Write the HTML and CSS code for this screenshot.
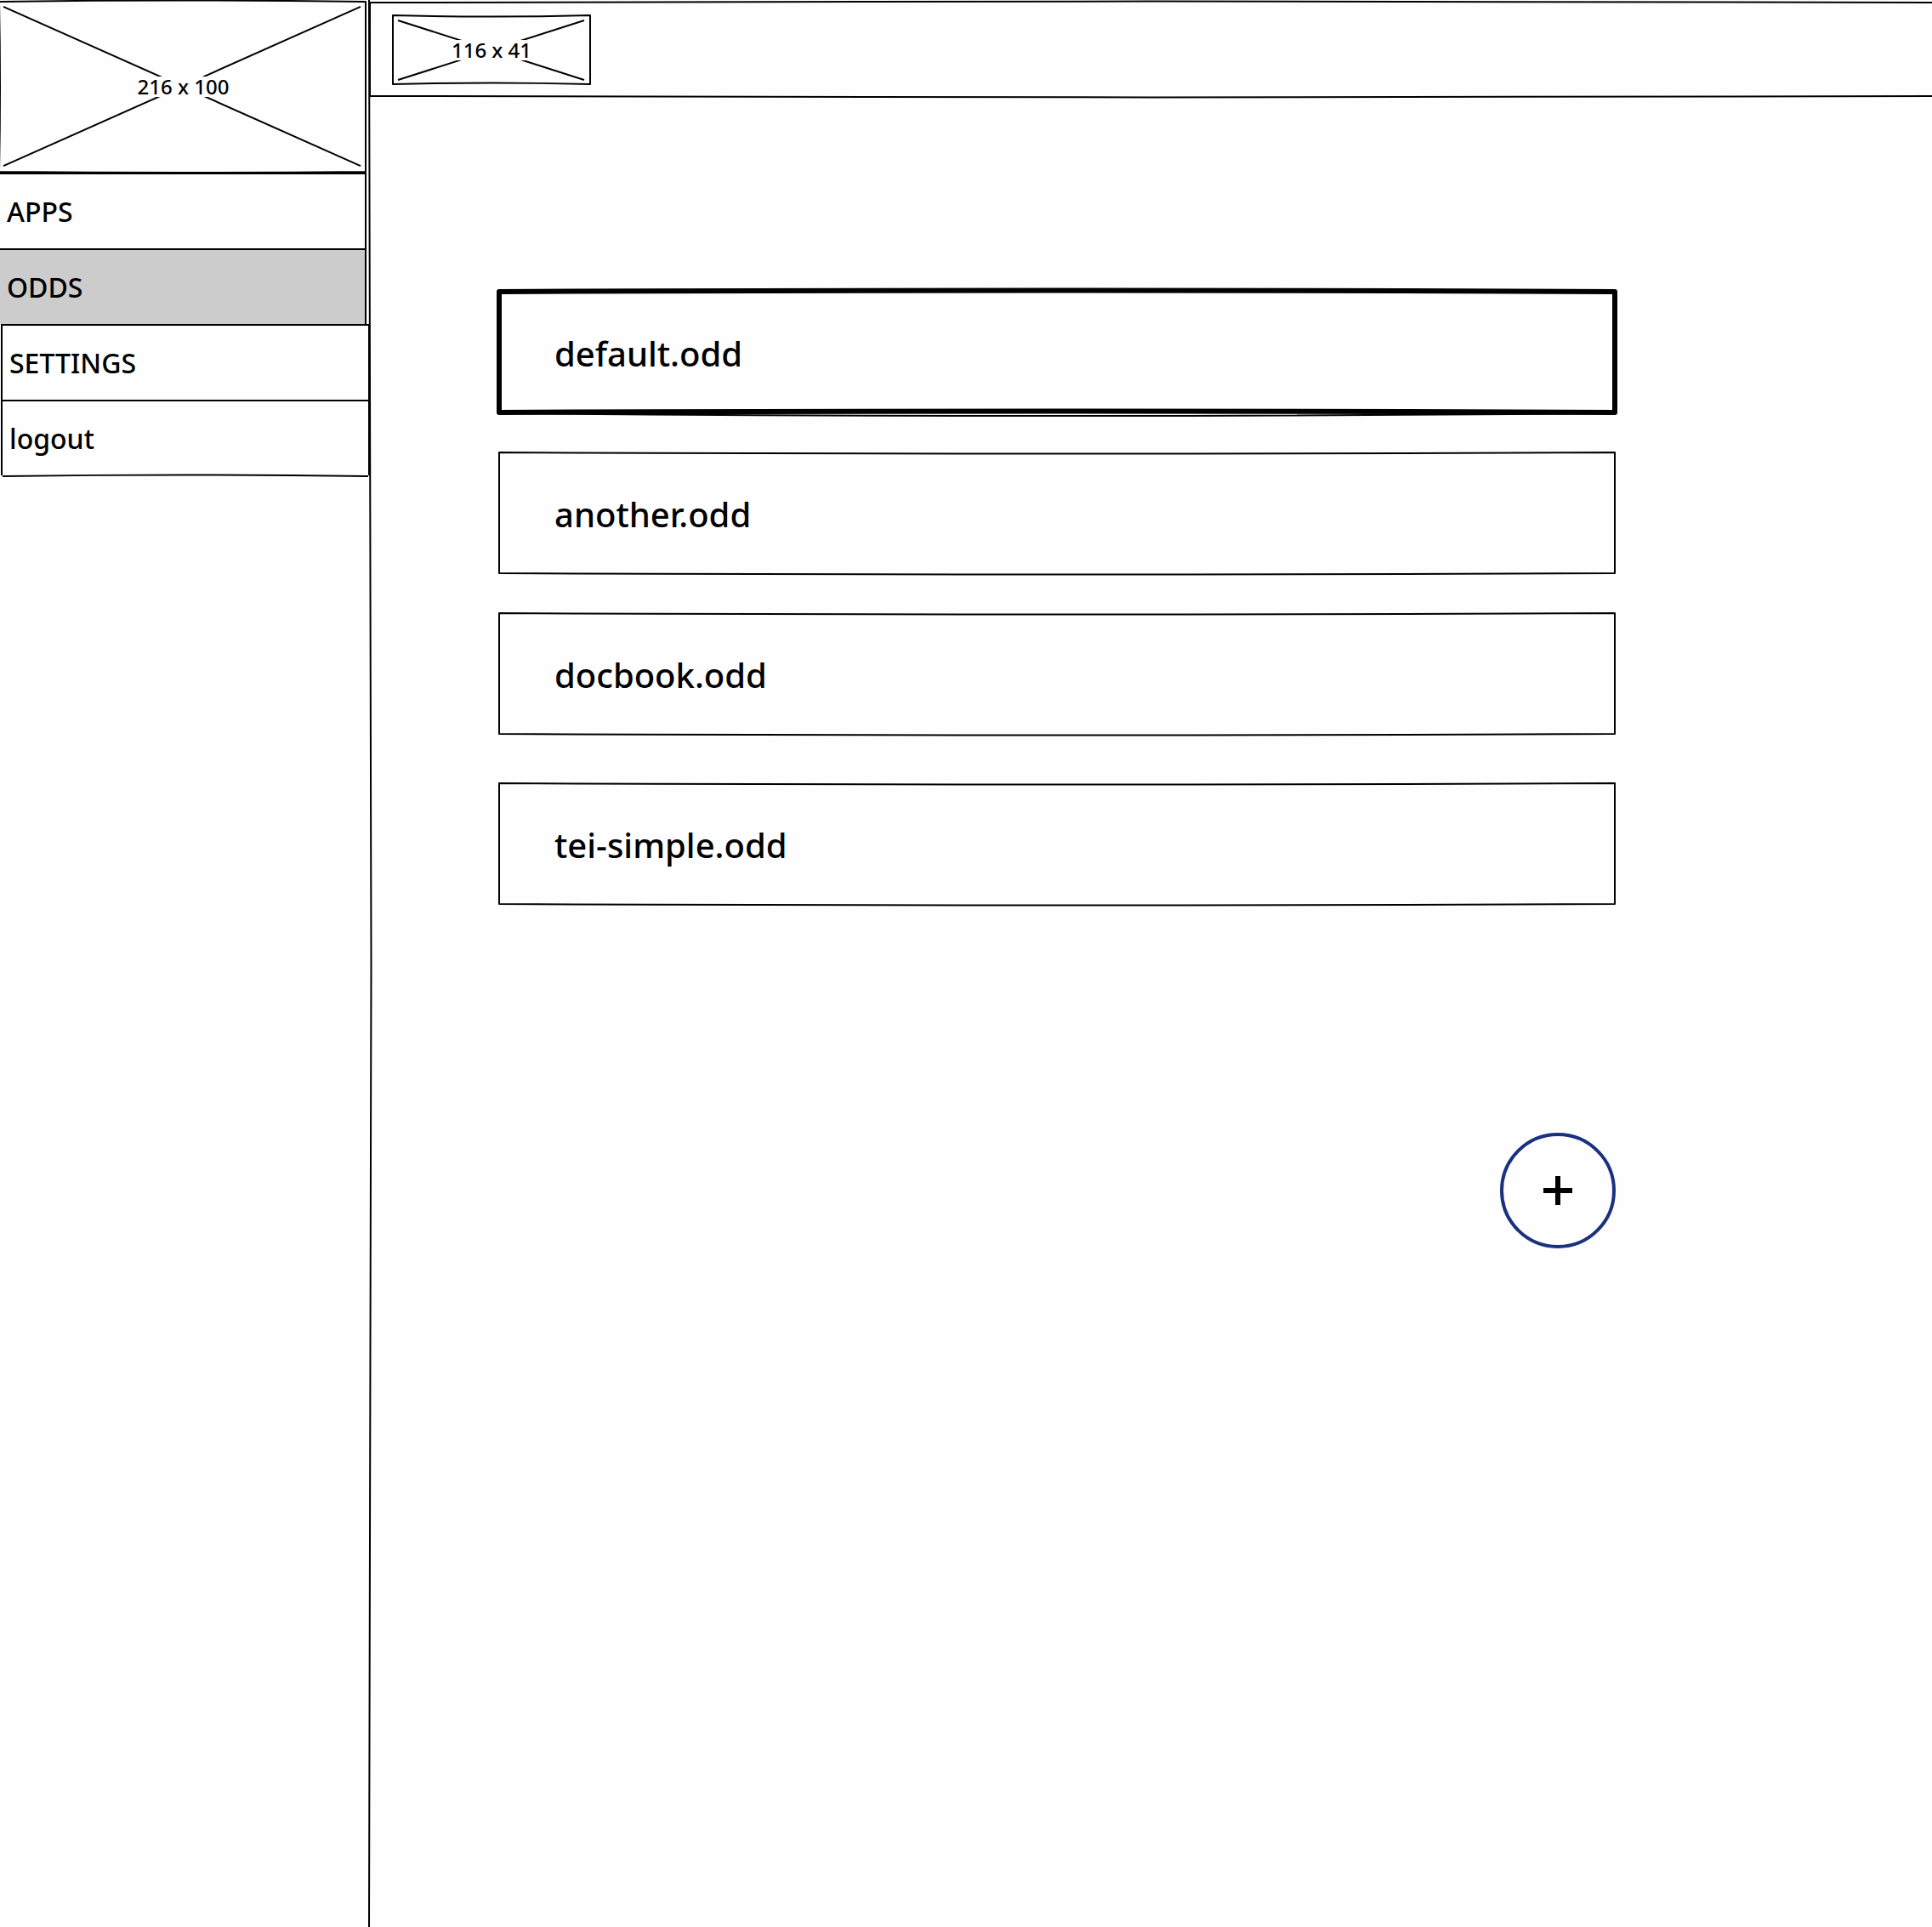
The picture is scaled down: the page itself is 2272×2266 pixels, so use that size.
FILE: index.html
```html
<!DOCTYPE html>
<html lang="en">
<head>
  <meta charset="utf-8">
  <meta name="viewport" content="width=device-width, initial-scale=1">
  <title>ODDS</title>
  <link rel="stylesheet" href="styles.css">
</head>
<body>
  <div class="app">
    <aside class="sidebar">
      <div class="placeholder placeholder-brand">
        <svg class="sketch" viewBox="0 0 431 204" preserveAspectRatio="none" aria-hidden="true">
          <path d="M-1 2Q215 -1 430 2V203Q215 205 -1 203Q1 102 -1 2M4 8L424 196M424 8L4 196"/>
        </svg>
        <span class="placeholder-size">216 x 100</span>
      </div>
      <nav>
        <ul class="menu">
          <li><a class="menu-item" href="#apps">APPS</a></li>
          <li><a class="menu-item menu-item-active" href="#odds" aria-current="page">ODDS</a></li>
        </ul>
        <ul class="menu menu-account">
          <li><a class="menu-item" href="#settings">SETTINGS</a></li>
          <li>
            <a class="menu-item" href="#logout">logout</a>
            <svg class="sketch" viewBox="0 0 100 178" preserveAspectRatio="none" aria-hidden="true">
              <path d="M0 179Q50 176 100 179"/>
            </svg>
          </li>
        </ul>
      </nav>
      <svg class="sketch sketch-divider" viewBox="0 0 4 100" preserveAspectRatio="none" aria-hidden="true">
        <path d="M1 0Q6 50 1 100"/>
      </svg>
    </aside>
    <div class="content">
      <header class="topbar">
        <svg class="sketch" viewBox="0 0 100 115" preserveAspectRatio="none" aria-hidden="true">
          <path d="M0 113V3Q50 0 100 3M0 113Q50 116 100 113"/>
        </svg>
        <div class="placeholder placeholder-logo">
          <svg class="sketch" viewBox="0 0 234 83" preserveAspectRatio="none" aria-hidden="true">
            <path d="M1 1Q117 4 233 1V82Q117 79 1 82ZM7 7L226 77M226 7L7 77"/>
          </svg>
          <span class="placeholder-size">116 x 41</span>
        </div>
      </header>
      <main class="main">
        <ul class="files">
          <li><a class="file file-selected" href="#default">
            <svg class="sketch" viewBox="0 0 100 142" preserveAspectRatio="none" aria-hidden="true">
              <path class="thin" d="M0 143Q50 149 100 143"/>
              <path d="M0 0Q50 -3 100 0V142Q50 139 0 142Z"/>
            </svg>
            <span>default.odd</span></a></li>
          <li><a class="file" href="#another">
            <svg class="sketch" viewBox="0 0 100 142" preserveAspectRatio="none" aria-hidden="true">
              <path d="M0 0Q50 3 100 0V142Q50 145 0 142Z"/>
            </svg>
            <span>another.odd</span></a></li>
          <li><a class="file" href="#docbook">
            <svg class="sketch" viewBox="0 0 100 142" preserveAspectRatio="none" aria-hidden="true">
              <path d="M0 0Q50 3 100 0V142Q50 145 0 142Z"/>
            </svg>
            <span>docbook.odd</span></a></li>
          <li class="files-last"><a class="file" href="#tei-simple">
            <svg class="sketch" viewBox="0 0 100 142" preserveAspectRatio="none" aria-hidden="true">
              <path d="M0 0Q50 3 100 0V142Q50 145 0 142Z"/>
            </svg>
            <span>tei-simple.odd</span></a></li>
        </ul>
        <button class="add" type="button" aria-label="Add">
          <svg class="add-icon" viewBox="0 0 34 34" aria-hidden="true"><path d="M17 0V34M0 17H34"/></svg>
        </button>
      </main>
    </div>
  </div>
</body>
</html>
```
FILE: styles.css
```css
* {
  box-sizing: border-box;
}

body {
  margin: 0;
  background: #fefefe;
  color: #000;
  font-family: "Comic Sans MS", "Noto Sans", sans-serif;
  font-weight: 500;
}

ul {
  margin: 0;
  padding: 0;
  list-style: none;
}

a {
  color: inherit;
  text-decoration: none;
}

.app {
  display: grid;
  grid-template-columns: 435px 1fr;
  min-height: 100vh;
  overflow: hidden;
}

/* Hand-drawn outlines, stretched over the box they belong to */
.sketch {
  position: absolute;
  inset: 0;
  width: 100%;
  height: 100%;
  overflow: visible;
  fill: none;
  stroke: #000;
  stroke-width: 2px;
  stroke-linejoin: round;
  pointer-events: none;
}

.sketch path {
  vector-effect: non-scaling-stroke;
}

.sidebar {
  position: relative;
}

.sketch-divider {
  left: auto;
  right: -2px;
  width: 4px;
}

.placeholder {
  position: relative;
  display: flex;
  align-items: center;
  justify-content: center;
}

.placeholder-brand {
  height: 203px;
  margin-right: 4px;
}

.placeholder-logo {
  width: 234px;
  height: 83px;
}

.placeholder-size {
  position: relative;
  background: #fefefe;
  font-size: 24px;
  line-height: 24px;
}

.menu {
  margin-right: 4px;
  border-right: 2px solid #000;
}

.menu-account {
  position: relative;
  margin: 0 0 0 1px;
  border: solid #000;
  border-width: 0 2px;
}

.menu-item {
  display: flex;
  align-items: center;
  height: 89px;
  padding-left: 8px;
  border-top: 2px solid #000;
  font-size: 32px;
  line-height: 44px;
}

.menu-item-active {
  background: #ccc;
}

.topbar {
  position: relative;
  height: 115px;
  padding: 17px 26px;
}

.main {
  display: flex;
  flex-direction: column;
  padding: 227px 372px 64px 151px;
}

.files {
  display: flex;
  flex-direction: column;
  gap: 45px;
}

.files-last {
  margin-top: 11px;
}

.file {
  position: relative;
  display: flex;
  align-items: center;
  height: 144px;
  padding: 4px 0 0 66px;
  font-size: 40px;
  line-height: 56px;
}

.file .sketch {
  inset: 1px;
  width: calc(100% - 2px);
  height: calc(100% - 2px);
}

.file-selected .sketch {
  stroke-width: 6px;
}

.file-selected .thin {
  stroke-width: 2px;
}

.add {
  display: flex;
  align-items: center;
  justify-content: center;
  align-self: flex-end;
  width: 136px;
  height: 136px;
  margin-top: 268px;
  padding: 0;
  border: 4px solid #1a317f;
  border-radius: 50%;
  background: transparent;
}

.add-icon {
  width: 34px;
  height: 34px;
  stroke: #000;
  stroke-width: 6px;
}
```
